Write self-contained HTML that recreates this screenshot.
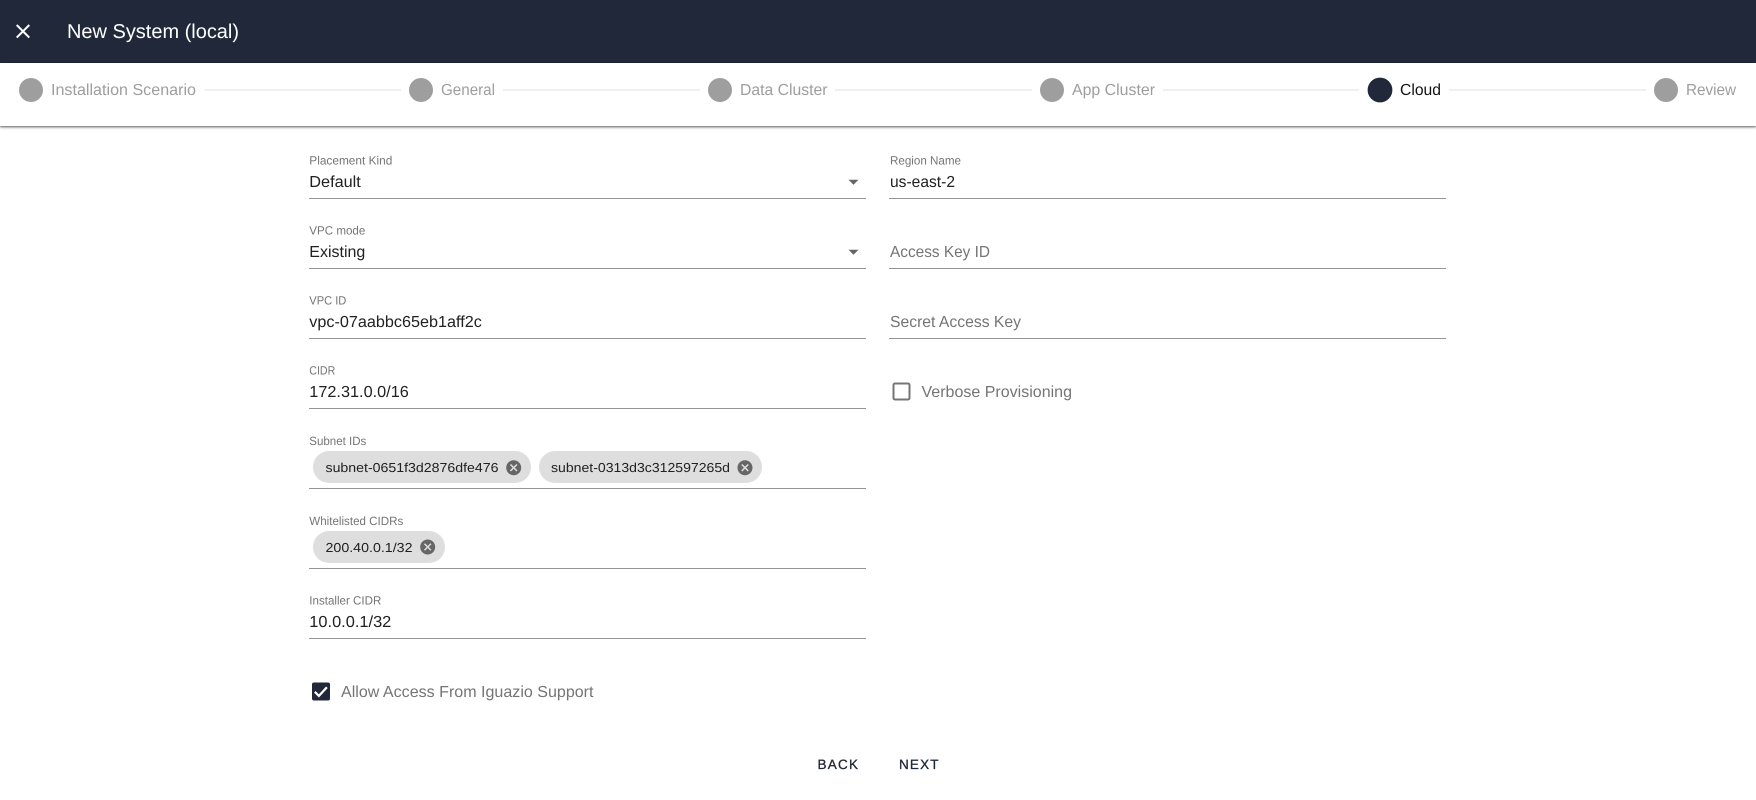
<!DOCTYPE html>
<html lang="en">
<head>
<meta charset="utf-8">
<title>New System (local)</title>
<style>
html,body{margin:0;padding:0;background:#fff;width:1756px;height:800px;overflow:hidden}
body{position:relative;font-family:"Liberation Sans",sans-serif}
#hd{position:absolute;left:0;top:0;width:1756px;height:63px;background:#212839}
#st{position:absolute;left:0;top:63px;width:1756px;height:63px;background:#fff;box-shadow:0 1px 2px rgba(0,0,0,.55),0 2px 3px rgba(0,0,0,.12)}
svg{position:absolute;left:0;top:0}
text{font-family:"Liberation Sans",sans-serif;text-rendering:geometricPrecision}
.s{font-size:16px;fill:#9e9e9e}
.l{font-size:12px;fill:#757575}
.v{font-size:16px;fill:#212121}
.p{font-size:16px;fill:#757575}
.c{font-size:13px;fill:#212121}
.b{font-size:13.5px;fill:#212839;stroke:#212839;stroke-width:.3}
</style>
</head>
<body>
<div id="hd"></div>
<div id="st"></div>
<svg width="1756" height="800" viewBox="0 0 1756 800">
  <path transform="translate(11,19.3)" fill="#fff" d="M19 6.41L17.59 5 12 10.59 6.41 5 5 6.41 10.59 12 5 17.59 6.41 19 12 13.41 17.59 19 19 17.59 13.41 12z"/>
  <text x="67" y="38" font-size="20" fill="#fff" textLength="172" lengthAdjust="spacingAndGlyphs">New System (local)</text>

  <g fill="#e0e0e0">
    <rect x="204.5" y="89.5" width="196.5" height="1"/>
    <rect x="503" y="89.5" width="197" height="1"/>
    <rect x="835" y="89.5" width="197" height="1"/>
    <rect x="1163" y="89.5" width="196" height="1"/>
    <rect x="1449" y="89.5" width="197" height="1"/>
  </g>
  <g fill="#9e9e9e">
    <circle cx="31" cy="90" r="12"/>
    <circle cx="421" cy="90" r="12"/>
    <circle cx="720" cy="90" r="12"/>
    <circle cx="1052" cy="90" r="12"/>
    <circle cx="1666" cy="90" r="12"/>
  </g>
  <circle cx="1380" cy="90" r="12.4" fill="#212839"/>
  <text class="s" x="51" y="95" textLength="145" lengthAdjust="spacingAndGlyphs">Installation Scenario</text>
  <text class="s" x="441" y="95" textLength="54" lengthAdjust="spacingAndGlyphs">General</text>
  <text class="s" x="740" y="95" textLength="87.5" lengthAdjust="spacingAndGlyphs">Data Cluster</text>
  <text class="s" x="1072" y="95" textLength="83" lengthAdjust="spacingAndGlyphs">App Cluster</text>
  <text x="1400" y="95" font-size="16" fill="#111" textLength="41" lengthAdjust="spacingAndGlyphs">Cloud</text>
  <text class="s" x="1686" y="95" textLength="50" lengthAdjust="spacingAndGlyphs">Review</text>

  <g fill="#949494">
    <rect x="309" y="198" width="557" height="1"/>
    <rect x="309" y="268" width="557" height="1"/>
    <rect x="309" y="338" width="557" height="1"/>
    <rect x="309" y="408" width="557" height="1"/>
    <rect x="309" y="488" width="557" height="1"/>
    <rect x="309" y="568" width="557" height="1"/>
    <rect x="309" y="638" width="557" height="1"/>
    <rect x="889" y="198" width="557" height="1"/>
    <rect x="889" y="268" width="557" height="1"/>
    <rect x="889" y="338" width="557" height="1"/>
  </g>

  <text class="l" x="309.3" y="164.7" textLength="83" lengthAdjust="spacingAndGlyphs">Placement Kind</text>
  <text class="v" x="309.3" y="186.8" textLength="51.5" lengthAdjust="spacingAndGlyphs">Default</text>
  <path fill="#666" d="M848.5 179.8h10l-5 5z"/>
  <text class="l" x="309.3" y="234.7" textLength="56" lengthAdjust="spacingAndGlyphs">VPC mode</text>
  <text class="v" x="309.3" y="256.8" textLength="56" lengthAdjust="spacingAndGlyphs">Existing</text>
  <path fill="#666" d="M848.5 249.8h10l-5 5z"/>
  <text class="l" x="309.3" y="304.7" textLength="37" lengthAdjust="spacingAndGlyphs">VPC ID</text>
  <text class="v" x="309.3" y="326.8" textLength="172.5" lengthAdjust="spacingAndGlyphs">vpc-07aabbc65eb1aff2c</text>
  <text class="l" x="309.3" y="374.7" textLength="26" lengthAdjust="spacingAndGlyphs">CIDR</text>
  <text class="v" x="309.3" y="396.8" textLength="99.5" lengthAdjust="spacingAndGlyphs">172.31.0.0/16</text>

  <text class="l" x="309.3" y="445" textLength="57" lengthAdjust="spacingAndGlyphs">Subnet IDs</text>
  <rect x="313" y="451" width="218" height="32" rx="16" fill="#dedede"/>
  <text class="c" x="325.5" y="472" textLength="173" lengthAdjust="spacingAndGlyphs">subnet-0651f3d2876dfe476</text>
  <path transform="translate(504.7,458.7) scale(.75)" fill="#666" d="M12 2C6.47 2 2 6.47 2 12s4.47 10 10 10 10-4.47 10-10S17.53 2 12 2zm5 13.59L15.59 17 12 13.41 8.41 17 7 15.59 10.59 12 7 8.41 8.41 7 12 10.59 15.59 7 17 8.41 13.41 12 17 15.59z"/>
  <rect x="539" y="451" width="223" height="32" rx="16" fill="#dedede"/>
  <text class="c" x="551" y="472" textLength="179" lengthAdjust="spacingAndGlyphs">subnet-0313d3c312597265d</text>
  <path transform="translate(736,458.7) scale(.75)" fill="#666" d="M12 2C6.47 2 2 6.47 2 12s4.47 10 10 10 10-4.47 10-10S17.53 2 12 2zm5 13.59L15.59 17 12 13.41 8.41 17 7 15.59 10.59 12 7 8.41 8.41 7 12 10.59 15.59 7 17 8.41 13.41 12 17 15.59z"/>

  <text class="l" x="309.3" y="525" textLength="94" lengthAdjust="spacingAndGlyphs">Whitelisted CIDRs</text>
  <rect x="313" y="531" width="132" height="32" rx="16" fill="#dedede"/>
  <text class="c" x="325.5" y="552" textLength="87" lengthAdjust="spacingAndGlyphs">200.40.0.1/32</text>
  <path transform="translate(418.7,538) scale(.75)" fill="#666" d="M12 2C6.47 2 2 6.47 2 12s4.47 10 10 10 10-4.47 10-10S17.53 2 12 2zm5 13.59L15.59 17 12 13.41 8.41 17 7 15.59 10.59 12 7 8.41 8.41 7 12 10.59 15.59 7 17 8.41 13.41 12 17 15.59z"/>

  <text class="l" x="309.3" y="604.7" textLength="72" lengthAdjust="spacingAndGlyphs">Installer CIDR</text>
  <text class="v" x="309.3" y="626.8" textLength="82" lengthAdjust="spacingAndGlyphs">10.0.0.1/32</text>

  <rect x="312" y="682.5" width="18" height="18" rx="2" fill="#212839"/>
  <path d="M314.8 691.8l4.1 4.1 8-8.6" fill="none" stroke="#fff" stroke-width="2.2"/>
  <text class="p" x="341" y="696.8" textLength="252.5" lengthAdjust="spacingAndGlyphs">Allow Access From Iguazio Support</text>

  <text class="l" x="890" y="164.7" textLength="71" lengthAdjust="spacingAndGlyphs">Region Name</text>
  <text class="v" x="890" y="186.8" textLength="65" lengthAdjust="spacingAndGlyphs">us-east-2</text>
  <text class="p" x="890" y="256.8" textLength="100" lengthAdjust="spacingAndGlyphs">Access Key ID</text>
  <text class="p" x="890" y="326.8" textLength="131" lengthAdjust="spacingAndGlyphs">Secret Access Key</text>
  <rect x="893.5" y="383.5" width="16" height="16" rx="1.5" fill="none" stroke="#757575" stroke-width="2"/>
  <text class="p" x="921.5" y="396.8" textLength="150.5" lengthAdjust="spacingAndGlyphs">Verbose Provisioning</text>

  <text class="b" x="817.5" y="769" textLength="40.5" lengthAdjust="spacing">BACK</text>
  <text class="b" x="899" y="769" textLength="39.5" lengthAdjust="spacing">NEXT</text>
</svg>
</body>
</html>
